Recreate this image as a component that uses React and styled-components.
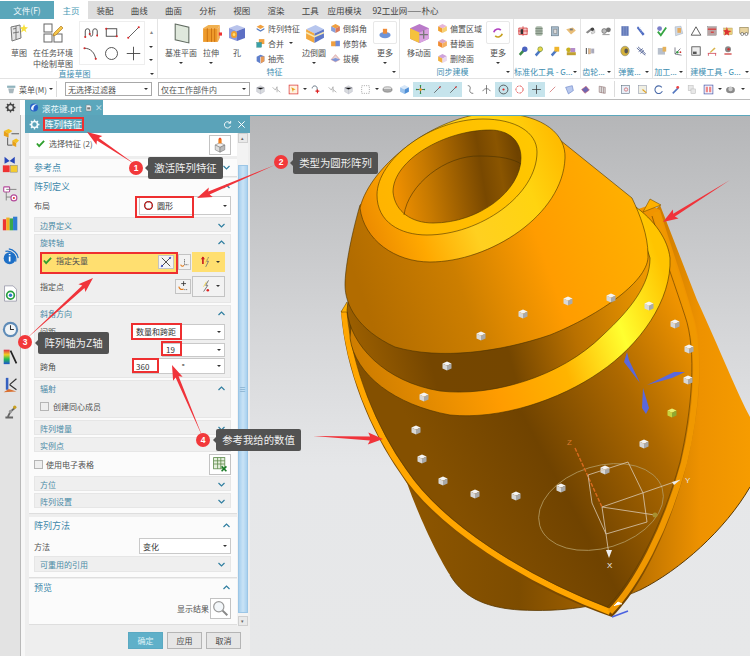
import React from "react";
import styled, { createGlobalStyle } from "styled-components";

const GlobalStyle = createGlobalStyle`
  html, body { margin: 0; padding: 0; background: #fff; }
  body { font-family: "Noto Sans CJK SC", "Noto Sans", sans-serif; font-size: 8px; color: #505050; }
  * { box-sizing: border-box; }
`;

const Page = styled.div`
  position: relative;
  width: 750px;
  height: 656px;
  overflow: hidden;
  display: flex;
  flex-direction: column;
  background: #fff;
`;

/* ---------- title tabs ---------- */
const TabBar = styled.div`
  display: flex;
  height: 18px;
  margin-top: 1px;
  background: #dedede;
  font-size: 8.5px;
`;
const FileTab = styled.div`
  width: 54px;
  background: #5aa6ba;
  color: #eef7fa;
  display: flex;
  align-items: center;
  justify-content: center;
`;
const Tab = styled.div`
  width: ${(p) => p.$w || 34.2}px;
  display: flex;
  align-items: center;
  justify-content: center;
  white-space: nowrap;
  color: ${(p) => (p.$active ? "#4a9ab5" : "#444")};
  background: ${(p) => (p.$active ? "#fff" : "transparent")};
`;

/* ---------- ribbon ---------- */
const Ribbon = styled.div`
  display: flex;
  height: 60px;
  background: #fff;
  border-bottom: 1px solid #e3e3e3;
`;
const Group = styled.div`
  width: ${(p) => p.$w}px;
  flex: none;
  display: flex;
  flex-direction: column;
  border-right: 1px solid #e4e4e4;
  padding-top: 3px;
  overflow: hidden;
`;
const GroupBody = styled.div`
  flex: 1;
  display: flex;
  align-items: flex-start;
  padding-left: ${(p) => p.$pl || 0}px;
`;
const GroupFoot = styled.div`
  position: relative;
  height: 11px;
  line-height: 10px;
  text-align: center;
  color: #3d8db0;
  white-space: nowrap;
  padding-right: 8px;
  &::after {
    content: "";
    position: absolute;
    right: 3px;
    top: 4px;
    border: 2px solid transparent;
    border-top: 2.5px solid #333;
  }
`;
const BigTool = styled.div`
  width: ${(p) => p.$w}px;
  flex: none;
  display: flex;
  flex-direction: column;
  align-items: center;
  text-align: center;
  line-height: 11px;
  white-space: nowrap;
`;
const BigIcon = styled.div`
  height: 22px;
  display: flex;
  align-items: center;
  margin-bottom: 3px;
`;
const Caret = styled.span`
  display: block;
  width: 0;
  height: 0;
  margin: ${(p) => p.$m || "4px auto 0"};
  border: 2px solid transparent;
  border-top: 2.5px solid #333;
  border-bottom: 0;
`;
const Gallery = styled.div`
  width: 66px;
  height: 44px;
  flex: none;
  margin: -1px 0 0 3px;
  border: 1px solid #eee;
  display: grid;
  grid-template-columns: repeat(3, 1fr);
  place-items: center;
`;
const GalleryScroll = styled.div`
  width: 10px;
  height: 44px;
  margin-left: 1px;
  display: flex;
  flex-direction: column;
  align-items: center;
  justify-content: space-around;
  color: #888;
  font-size: 6px;
`;
const ToolList = styled.div`
  width: ${(p) => p.$w}px;
  flex: none;
  display: flex;
  flex-direction: column;
  gap: 3px;
  padding-left: ${(p) => p.$pl || 0}px;
`;
const ListItem = styled.div`
  height: 12px;
  display: flex;
  align-items: center;
  gap: 2px;
  white-space: nowrap;
`;
const MoreButton = styled.div`
  width: 24px;
  height: 23px;
  border: 1px solid #e8e8e8;
  border-radius: 2px;
  display: flex;
  align-items: center;
  justify-content: center;
  margin-bottom: 3px;
  margin-top: -1px;
`;
const MiniGrid = styled.div`
  display: grid;
  grid-template-columns: repeat(${(p) => p.$cols}, 16px);
  grid-auto-rows: 20px;
  place-items: center;
`;

/* ---------- quick toolbar ---------- */
const QuickBar = styled.div`
  display: flex;
  align-items: center;
  height: 21px;
  background: #fff;
  border-bottom: 1px solid #bcbcbc;
  padding-left: 6px;
`;
const MenuButton = styled.div`
  width: 50px;
  flex: none;
  display: flex;
  align-items: center;
  gap: 2px;
  white-space: nowrap;
`;
const BarDivider = styled.div`
  width: 1px;
  height: 16px;
  flex: none;
  background: #dcdcdc;
  margin: ${(p) => p.$m || "0 8px 0 0"};
`;
const BarSelect = styled.div`
  width: ${(p) => p.$w}px;
  height: 14px;
  flex: none;
  margin-right: ${(p) => p.$mr || 0}px;
  border: 1px solid #a8a8a8;
  display: flex;
  align-items: center;
  justify-content: space-between;
  padding: 0 3px 0 2px;
  white-space: nowrap;
`;
const BarIcon = styled.div`
  width: ${(p) => p.$w || 16.5}px;
  height: 15px;
  flex: none;
  display: flex;
  align-items: center;
  justify-content: center;
  background: ${(p) => (p.$on ? "#c6e4ec" : "transparent")};
`;

/* ---------- document tab strip ---------- */
const DocStrip = styled.div`
  display: flex;
  height: 15px;
  background: #fff;
`;
const GearCell = styled.div`
  width: 20px;
  background: #e3e3e3;
  display: flex;
  align-items: center;
  justify-content: center;
  margin-right: 5px;
  color: #444;
`;
const DocTab = styled.div`
  width: 78px;
  background: #5ba7bc;
  color: #eaf6fa;
  display: flex;
  align-items: center;
  gap: 3px;
  padding-left: 4px;
  font-size: 8.5px;
  white-space: nowrap;
`;
const TabClose = styled.span`
  color: #b9dbe5;
  font-size: 9px;
`;

/* ---------- body ---------- */
const Body = styled.div`
  flex: 1;
  display: flex;
  min-height: 0;
`;
const SideBar = styled.div`
  width: 25px;
  flex: none;
  background: #e3e3e3;
  border-right: 4px solid #f7f7f7;
  display: flex;
  flex-direction: column;
  align-items: center;
  box-shadow: inset -1px 0 0 #b9b9b9;
`;
const SideIcon = styled.div`
  height: 17px;
  width: 20px;
  flex: none;
  margin-top: ${(p) => p.$mt}px;
  display: flex;
  align-items: center;
  justify-content: center;
`;

/* ---------- dialog panel ---------- */
const Panel = styled.div`
  width: 225px;
  flex: none;
  display: flex;
  flex-direction: column;
  background: #eeeeee;
`;
const PanelHead = styled.div`
  height: 18px;
  flex: none;
  background: #5ba3b9;
  color: #f2fafc;
  display: flex;
  align-items: center;
  padding: 0 4px;
  gap: 4px;
  font-size: 9.5px;
`;
const HeadActions = styled.div`
  margin-left: auto;
  display: flex;
  gap: 5px;
  align-items: center;
`;
const PanelMid = styled.div`
  display: flex;
  height: 493px;
  padding-left: 4px;
`;
const PanelColumn = styled.div`
  width: 208px;
  display: flex;
  flex-direction: column;
`;
const SelectBlock = styled.div`
  height: 23px;
  background: #fff;
  display: flex;
  align-items: center;
  justify-content: space-between;
  padding: 0 6px 0 7px;
  margin-bottom: 3px;
`;
const CheckedLabel = styled.div`
  display: flex;
  align-items: center;
  gap: 4px;
  padding-bottom: 3px;
`;
const Section = styled.div`
  background: #fbfbfb;
  height: ${(p) => p.$h}px;
  margin-bottom: ${(p) => p.$mb || 0}px;
  border-bottom: 1px solid #dedede;
  padding: 0 6px 0 5px;
  display: flex;
  flex-direction: column;
`;
const SectionTitle = styled.div`
  height: 17px;
  flex: none;
  display: flex;
  align-items: center;
  justify-content: space-between;
  color: #3f88aa;
  font-size: 9px;
  padding-right: 1px;
`;
const Sub = styled.div`
  background: #efefef;
  border: 1px solid #e6e6e6;
  height: ${(p) => p.$h}px;
  flex: none;
  margin: 1px 0;
  padding: 0 5px;
  display: flex;
  flex-direction: column;
`;
const SubTitle = styled.div`
  height: 14px;
  flex: none;
  display: flex;
  align-items: center;
  justify-content: space-between;
  color: #4b8aa6;
  font-size: 8px;
`;
const FieldRow = styled.div`
  height: ${(p) => p.$h || 16}px;
  flex: none;
  display: flex;
  align-items: center;
  justify-content: space-between;
  margin-top: ${(p) => p.$mt || 0}px;
`;
const Drop = styled.div`
  width: ${(p) => p.$w}px;
  height: ${(p) => p.$h || 16}px;
  flex: none;
  background: #fff;
  border: 1px solid #c9c9c9;
  display: flex;
  align-items: center;
  justify-content: space-between;
  padding: 0 3px;
  gap: 3px;
  color: #333;
`;
const DropValue = styled.span`
  display: flex;
  align-items: center;
  gap: 3px;
  white-space: nowrap;
`;
const VectorBar = styled.div`
  width: 137px;
  height: 20px;
  background: #ffdf70;
  display: flex;
  align-items: center;
  justify-content: space-between;
  padding: 0 3px 0 3px;
`;
const SmallBtn = styled.div`
  width: ${(p) => p.$w || 16}px;
  height: ${(p) => p.$h || 16}px;
  flex: none;
  background: ${(p) => p.$bg || "#f2f2f2"};
  border: 1px solid ${(p) => p.$line || "#c3c3c3"};
  display: flex;
  align-items: center;
  justify-content: center;
`;
const BtnGroup = styled.div`
  display: flex;
  align-items: center;
  gap: 1px;
`;
const CheckBox = styled.span`
  width: 9px;
  height: 9px;
  flex: none;
  background: #eee;
  border: 1px solid #b5b5b5;
  display: inline-block;
`;
const CheckRow = styled.div`
  display: flex;
  align-items: center;
  gap: 4px;
  height: ${(p) => p.$h || 20}px;
  justify-content: ${(p) => (p.$between ? "space-between" : "flex-start")};
  flex: none;
`;
const RightRow = styled.div`
  display: flex;
  align-items: center;
  justify-content: flex-end;
  gap: 1px;
  height: 24px;
`;
const ScrollTrack = styled.div`
  width: 11px;
  background: #f3f3f3;
  display: flex;
  flex-direction: column;
  align-items: center;
  height: 493px;
`;
const ScrollArrow = styled.div`
  width: 10px;
  height: 10px;
  flex: none;
  background: #e9e9e9;
  border: 1px solid #cfcfcf;
  margin-top: ${(p) => p.$mt || 0}px;
  color: #666;
  font-size: 5px;
  line-height: 8px;
  text-align: center;
`;
const ScrollThumb = styled.div`
  width: 10px;
  height: 448px;
  margin-top: 22px;
  background: linear-gradient(90deg, #a8d0ee, #c9e3f6 50%, #a9d1ef);
  border: 1px solid #9cc6e6;
  display: flex;
  align-items: center;
  justify-content: center;
  color: #6e9cc0;
  font-size: 7px;
`;
const PanelFoot = styled.div`
  flex: 1;
  display: flex;
  align-items: flex-start;
  justify-content: flex-end;
  gap: 4px;
  padding: 6px 9px 0 0;
`;
const ActionBtn = styled.div`
  width: 35px;
  height: 17px;
  display: flex;
  align-items: center;
  justify-content: center;
  background: ${(p) => (p.$primary ? "#5fb0c9" : "#e6e6e6")};
  border: 1px solid ${(p) => (p.$primary ? "#5aa9c2" : "#b5b5b5")};
  color: ${(p) => (p.$primary ? "#dff2f7" : "#444")};
`;

/* ---------- viewport ---------- */
const Viewport = styled.div`
  flex: 1;
  min-width: 0;
  background: linear-gradient(180deg, #b5b6b8 0%, #d5d6d8 40%, #e6e7e9 65%, #e7e8e9 100%);
  border-top: 1px solid #5ba7bc;
  overflow: hidden;
`;
const ModelSvg = styled.svg`
  display: block;
  width: 500px;
  height: 540px;
`;

/* ---------- callouts over the page ---------- */
const ArrowLayer = styled.svg`
  position: absolute;
  left: 0;
  top: 0;
  width: 750px;
  height: 656px;
  pointer-events: none;
`;
const Mark = styled.div`
  position: absolute;
  left: ${(p) => p.$x}px;
  top: ${(p) => p.$y}px;
  width: ${(p) => p.$w}px;
  height: ${(p) => p.$h}px;
  border: 2px solid #ee2f30;
`;
const Badge = styled.div`
  position: absolute;
  left: ${(p) => p.$x - 7}px;
  top: ${(p) => p.$y - 7}px;
  width: 14px;
  height: 14px;
  border-radius: 50%;
  background: #f2383a;
  color: #fff;
  font: bold 8.5px/14px "Liberation Sans", sans-serif;
  text-align: center;
`;
const Tip = styled.div`
  position: absolute;
  left: ${(p) => p.$x}px;
  top: ${(p) => p.$y}px;
  width: ${(p) => p.$w}px;
  height: 22px;
  border-radius: 2px;
  background: #525252;
  color: #f0f0f0;
  font-size: 10.4px;
  line-height: 21px;
  text-align: center;
  white-space: nowrap;
  &::before {
    content: "";
    position: absolute;
    left: -3px;
    top: 8px;
    border: 3px solid transparent;
    border-left: 0;
    border-right-color: #525252;
  }
`;

/* ---------- drawings ---------- */
const cube = (top, left, right) => (
  <>
    <polygon points="10,2 18,6 10,10 2,6" fill={top} />
    <polygon points="2,6 10,10 10,18 2,14" fill={left} />
    <polygon points="18,6 10,10 10,18 18,14" fill={right} />
  </>
);
const dots = (list, c = "#d8282a") =>
  list.map(([x, y], i) => <circle key={i} cx={x} cy={y} r="1.4" fill={c} />);

const GLYPHS = {
  sketch: (
    <>
      <path d="M2 4l9-2 1 13-9 3z" fill="#e4e4e4" stroke="#777" />
      <path d="M4 6l3-.6M4 10l6-1M7 3v13" stroke="#777" fill="none" />
      <path d="M15 1l1 3 3 .5-2.5 2 1 3-2.5-2-3 2 1-3-2-2 3-.5z" fill="#f7e03c" />
    </>
  ),
  task: (
    <>
      <rect x="1" y="1" width="8" height="8" fill="#fff" stroke="#666" />
      <rect x="1" y="11" width="8" height="8" fill="#fff" stroke="#666" />
      <rect x="11" y="11" width="8" height="8" fill="#fff" stroke="#666" />
      <path d="M11 10l7-7 2 2-7 7-3 1z" fill="#f5c64a" stroke="#a36b12" strokeWidth=".6" />
    </>
  ),
  curve: (
    <>
      <path d="M3 16V8a3 3 0 016 0v4c0 2 1 3 2 3s2-1 2-4V8a3 3 0 016 0v6" fill="none" stroke="#444" strokeWidth="1.2" />
      {dots([[3, 16], [9, 12], [19, 14]])}
    </>
  ),
  rect: (
    <>
      <rect x="3" y="5" width="14" height="10" fill="none" stroke="#444" strokeWidth="1.2" />
      {dots([[3, 5], [17, 15]])}
    </>
  ),
  line: (
    <>
      <path d="M3 17L17 3" stroke="#444" strokeWidth="1.1" />
      {dots([[3, 17], [17, 3]])}
    </>
  ),
  arc: (
    <>
      <path d="M2 3c8 0 14 6 15 15" fill="none" stroke="#444" strokeWidth="1.2" />
      {dots([[2, 3], [17, 17]])}
    </>
  ),
  circle: <circle cx="10" cy="10" r="8" fill="none" stroke="#444" strokeWidth="1.2" />,
  plus: <path d="M10 1v18M1 10h18" stroke="#444" strokeWidth="1.2" />,
  plane: <path d="M4 1l13 3v15L4 16z" fill="#dfe8dc" stroke="#606a60" />,
  extrude: (
    <>
      <path d="M2 5l5-3h11l-2 3z" fill="#f0b050" />
      <path d="M2 5h14v13H2z" fill="#ee9a2a" />
      <path d="M16 5l2-3v12l-2 4z" fill="#f3b05c" />
      <path d="M6 5v13M10 5v13M13 5v13" stroke="#c66b10" strokeWidth=".8" />
      <rect x="17" y="9" width="3" height="3" fill="#e33" />
    </>
  ),
  hole: (
    <>
      <polygon points="2,5 10,2 18,5 10,8" fill="#b9c4ec" />
      <polygon points="2,5 10,8 10,18 2,15" fill="#8c9bdc" />
      <polygon points="18,5 10,8 10,18 18,15" fill="#5d6fc4" />
      <ellipse cx="7" cy="11.500" rx="3" ry="3.500" fill="#f0a030" />
      <ellipse cx="7" cy="11.500" rx="1.300" ry="1.600" fill="#ffe070" />
    </>
  ),
  pattern: (
    <>
      <polygon points="10,3 17,7 10,11 3,7" fill="#f0a040" />
      <polygon points="3,9 10,13 17,9 17,12 10,16 3,12" fill="#5b7fc2" />
    </>
  ),
  unite: (
    <>
      <rect x="7" y="2" width="10" height="9" fill="#f0a040" />
      <rect x="3" y="8" width="9" height="9" fill="#39a0a8" stroke="#276" strokeWidth=".5" />
    </>
  ),
  shell: (
    <>
      <polygon points="3,7 10,3 17,6 17,15 10,19 3,15" fill="#5f7fcb" />
      <polygon points="10,7 17,6 17,15 10,19" fill="#e99a55" />
      <path d="M10 7v12" stroke="#fff" />
    </>
  ),
  blend: (
    <>
      <polygon points="2,6 11,2 19,6 10,10" fill="#b7c6ee" />
      <polygon points="2,6 10,10 10,19 2,15" fill="#f3a83c" />
      <polygon points="19,6 10,10 10,19 19,14" fill="#5f78c8" />
      <path d="M2 9l8 4 9-4" stroke="#f5e6b0" strokeWidth="1.5" fill="none" />
    </>
  ),
  chamfer: cube("#f0a040", "#8aa0da", "#d9785a"),
  trim: (
    <>
      <rect x="2" y="6" width="9" height="9" fill="#f0a040" />
      <rect x="10" y="5" width="8" height="10" fill="#6f8ad6" />
    </>
  ),
  draft: (
    <>
      <polygon points="10,3 18,12 10,16 2,12" fill="#e8d7d7" stroke="#b33" strokeWidth=".6" />
      <polygon points="2,12 10,16 18,12 10,9" fill="#7f95d8" />
    </>
  ),
  sync: (
    <>
      <path d="M4 9a6 6 0 0110-3" fill="none" stroke="#b040c0" strokeWidth="2.4" />
      <path d="M16 11a6 6 0 01-10 3" fill="none" stroke="#c6a020" strokeWidth="2.4" />
    </>
  ),
  push: (
    <>
      <ellipse cx="10" cy="13" rx="8" ry="4.500" fill="#6f94d8" />
      <rect x="7" y="4" width="6" height="7" fill="#ef8c38" />
    </>
  ),
  move: (
    <>
      <polygon points="10,1 19,5 19,15 10,19 1,15 1,5" fill="#b97ac9" />
      <polygon points="1,5 10,9 10,19 1,15" fill="#f5c23d" />
      <polygon points="19,5 10,9 10,19 19,15" fill="#d9a2e0" />
      <path d="M14 7v8M10 11h8" stroke="#777" strokeWidth="1.2" />
    </>
  ),
  offset: cube("#e6b5d8", "#f0a030", "#f7cf6e"),
  replace: cube("#dba6c9", "#f08a30", "#f5b060"),
  remove: cube("#cfa3db", "#f0b040", "#e9d8ee"),
  redGrid: (
    <>
      <rect x="3" y="5" width="14" height="11" fill="#e88" opacity=".5" />
      <path d="M3 5h14v11H3zM10 2v16M2 10h16" fill="none" stroke="#c22" strokeWidth="1.1" />
      <rect x="6" y="7" width="4" height="8" fill="#333" />
    </>
  ),
  stack: (
    <>
      <rect x="4" y="2" width="12" height="16" rx="3" fill="#a8b7a8" />
      <path d="M4 6h12M4 10h12M4 14h12" stroke="#5a6a5a" />
    </>
  ),
  stack2: (
    <>
      <rect x="4" y="3" width="12" height="15" fill="#a9bccb" stroke="#5d7282" />
      <rect x="8" y="7" width="5" height="7" fill="#dcdcdc" stroke="#888" />
    </>
  ),
  tag: (
    <>
      <path d="M2 7l11-3 5 5-8 7z" fill="#e9be78" />
      <rect x="8" y="6" width="5" height="3" fill="#777" />
    </>
  ),
  clamp: (
    <>
      <path d="M3 12l9-7 2 3-8 6z" fill="#8a8a8a" />
      <circle cx="14" cy="7" r="3" fill="#444" />
      <path d="M12 12l6-3v4l-5 2z" fill="#ddd" stroke="#666" strokeWidth=".5" />
    </>
  ),
  clamp2: (
    <>
      <circle cx="7" cy="10" r="4" fill="#bbb" stroke="#555" />
      <circle cx="14" cy="8" r="4" fill="#777" />
      <path d="M4 16h12" stroke="#555" />
    </>
  ),
  wrenchBlue: (
    <>
      <path d="M3 15l8-9 3 3-8 9z" fill="#3f8a4a" />
      <circle cx="13" cy="7" r="4.500" fill="#4b62c0" />
    </>
  ),
  wrenchMix: (
    <>
      <path d="M3 16l8-9 3 3-8 9z" fill="#4d78c4" />
      <circle cx="12" cy="7" r="4" fill="#e8d84a" stroke="#6a8a30" />
    </>
  ),
  wrenchGold: (
    <>
      <path d="M3 16l8-9 3 3-8 9z" fill="#4d78c4" />
      <rect x="9" y="3" width="8" height="8" fill="#efb52c" />
    </>
  ),
  goldGear: (
    <>
      <circle cx="6" cy="8" r="4" fill="#c8b020" />
      <rect x="9" y="5" width="8" height="7" fill="#b58cc9" />
      <rect x="3" y="12" width="15" height="5" fill="#c0a030" />
    </>
  ),
  pin: (
    <>
      <rect x="3" y="5" width="2" height="10" fill="#666" />
      <rect x="7" y="6" width="4" height="9" fill="#e5b98b" stroke="#888" strokeWidth=".5" />
      <rect x="12" y="6" width="5" height="8" fill="#aab" />
    </>
  ),
  spring: (
    <>
      <rect x="4" y="2" width="12" height="16" fill="#6078b8" />
      <path d="M8 2v16M12 2v16" stroke="#9fb0dc" />
    </>
  ),
  screw: (
    <>
      <path d="M5 2l11 13-3 3L3 5z" fill="#4f6cc2" />
      <path d="M7 6l3-2M9 9l3-2M11 12l3-2" stroke="#d4e0f7" />
    </>
  ),
  drum: (
    <>
      <ellipse cx="10" cy="10" rx="7" ry="8" fill="#d4b13a" stroke="#887" />
      <ellipse cx="12" cy="10" rx="3" ry="4" fill="#555" />
    </>
  ),
  coil: <path d="M3 5l14 12M5 3l13 12M6 11l7-5M9 14l6-5" stroke="#5c6c9c" strokeWidth="1.6" fill="none" />,
  checkTool: (
    <>
      <circle cx="6" cy="6" r="4" fill="#7b7fc8" />
      <path d="M3 11l5 6 9-13" fill="none" stroke="#35a542" strokeWidth="3" />
    </>
  ),
  sheet: (
    <>
      <path d="M5 3l10-1 3 12-12 4z" fill="#cfd8e4" stroke="#8a98a8" strokeWidth=".6" />
      <rect x="9" y="5" width="6" height="8" fill="#e8a040" opacity=".8" />
    </>
  ),
  sheet2: (
    <>
      <rect x="3" y="5" width="12" height="11" fill="#b8c0cc" />
      <rect x="11" y="3" width="6" height="8" fill="#e4b15a" />
    </>
  ),
  axis: (
    <>
      <path d="M5 4v11l11 2M5 15l9-9" fill="none" stroke="#556" strokeWidth="1.2" />
      <circle cx="9" cy="12" r="2" fill="#3a9a4a" />
      <circle cx="14" cy="12" r="1.500" fill="#c33" />
    </>
  ),
  triangle: <path d="M10 3l8 14H2z" fill="none" stroke="#444" strokeWidth="1.4" />,
  tableRed: (
    <>
      <rect x="3" y="3" width="14" height="14" fill="#b9a3a3" stroke="#666" strokeWidth=".6" />
      <path d="M3 7h14" stroke="#d33" strokeWidth="2" />
      <path d="M8 12h5" stroke="#d33" strokeWidth="2" />
    </>
  ),
  starBox: (
    <>
      <rect x="3" y="5" width="14" height="11" fill="#e8cf7a" stroke="#a08a4a" strokeWidth=".6" />
      <path d="M8 3l2 6 6 1-5 3 1 5-4-3-4 3 1-6-3-3 5-1z" fill="#d33" />
    </>
  ),
  clips: (
    <>
      <rect x="3" y="4" width="14" height="10" fill="#e8d4a0" stroke="#8a7a4a" />
      <circle cx="7" cy="15" r="2.500" fill="#fff" stroke="#444" />
      <circle cx="14" cy="15" r="2.500" fill="#fff" stroke="#444" />
    </>
  ),
  frame: (
    <>
      <rect x="3" y="3" width="14" height="14" fill="#eee" stroke="#444" strokeWidth="1.3" />
      <rect x="5" y="11" width="6" height="4" fill="#555" />
    </>
  ),
  bench: (
    <>
      <path d="M3 14h14M4 14v4M16 14v4" stroke="#c34" strokeWidth="1.2" />
      <path d="M6 12l8-8 2 2-8 7z" fill="#d8b44a" />
    </>
  ),
  badgeTool: (
    <>
      <circle cx="10" cy="7" r="5" fill="#888" />
      <circle cx="11" cy="7" r="2" fill="#c33" />
      <path d="M4 15h12" stroke="#c33" strokeWidth="2" />
    </>
  ),
  gear: (
    <>
      <circle cx="10" cy="10" r="5.500" fill="none" stroke="currentColor" strokeWidth="3" />
      <path d="M10 1v3M10 16v3M1 10h3M16 10h3M3.600 3.600l2.100 2.100M14.300 14.300l2.100 2.100M3.600 16.400l2.100-2.100M14.300 5.700l2.100-2.100" stroke="currentColor" strokeWidth="2.400" />
    </>
  ),
  nxLogo: (
    <>
      <circle cx="10" cy="10" r="8" fill="#2660c8" />
      <path d="M4 11c2-6 8-8 12-7-5 1-8 6-7 12-3 0-5-2-5-5z" fill="#e9f1fb" />
    </>
  ),
  doc: (
    <>
      <path d="M3 2h10l4 4v12H3z" fill="#eef2f5" stroke="#777" strokeWidth="1.4" />
      <rect x="6" y="8" width="8" height="6" fill="#777" />
    </>
  ),
  refresh: <path d="M16 7a7 7 0 10.8 6M17 2v5h-5" fill="none" stroke="#fff" strokeWidth="2" />,
  close: <path d="M3 3l14 14M17 3L3 17" stroke="#fff" strokeWidth="2.200" />,
  check: <path d="M2 10l5 6L18 4" fill="none" stroke="#2f9f2d" strokeWidth="4" />,
  ring: (
    <>
      <circle cx="10" cy="10" r="7" fill="none" stroke="#7a1a1a" strokeWidth="2.400" />
      {dots([[10, 3], [17, 10], [10, 17], [3, 10], [15, 5], [5, 15], [5, 5], [15, 15]], "#e02020")}
    </>
  ),
  box3d: (
    <>
      <polygon points="4,10 10,7 16,10 10,13" fill="#eee" stroke="#666" strokeWidth=".6" />
      <polygon points="4,10 10,13 10,19 4,16" fill="#ddd" stroke="#666" strokeWidth=".6" />
      <polygon points="16,10 10,13 10,19 16,16" fill="#bbb" stroke="#666" strokeWidth=".6" />
      <rect x="8" y="2" width="4" height="6" fill="#f08020" />
      <rect x="9" y="1" width="2" height="2" fill="#e22" />
    </>
  ),
  vectorX: (
    <>
      <path d="M3 3l14 14M17 3L3 17" stroke="#222" strokeWidth="1.300" />
      <path d="M15 3l3-1-1 3zM5 17l-3 1 1-3z" fill="#2a3cc0" stroke="#2a3cc0" />
    </>
  ),
  vecAxes: (
    <>
      <path d="M10 4v10M10 14h7" stroke="#333" strokeWidth="1.200" strokeDasharray="2 1" fill="none" />
      <path d="M3 14c1 3 4 4 6 1" stroke="#e27a1a" strokeWidth="2" fill="none" />
    </>
  ),
  vecPlus: (
    <>
      <path d="M11 2v8M7 6h8" stroke="#333" strokeWidth="1.400" />
      <path d="M3 11c1 4 4 6 8 4" stroke="#e27a1a" strokeWidth="2" fill="none" />
      <path d="M12 16h6" stroke="#333" strokeDasharray="2 1" />
    </>
  ),
  inferred: (
    <>
      <path d="M7 3v10" stroke="#c92020" strokeWidth="2.400" />
      <path d="M4 6l3-4 3 4z" fill="#c92020" />
      <path d="M15 3l-3 6h3l-4 8" fill="none" stroke="#777" strokeWidth="1.300" />
      <path d="M14 4l-4 8" stroke="#f0d040" strokeWidth="1" />
    </>
  ),
  wand: (
    <>
      <path d="M15 2l-4 7h3l-6 9" fill="none" stroke="#777" strokeWidth="1.400" />
      <path d="M12 4l-4 7" stroke="#f0d040" strokeWidth="1.200" />
      <circle cx="14" cy="16" r="1.800" fill="#d22" />
    </>
  ),
  table: (
    <>
      <rect x="2" y="2" width="14" height="14" fill="#e4efdc" stroke="#5d8a4a" />
      <path d="M2 6h14M2 10h14M7 2v14M11 2v14" stroke="#5d8a4a" />
      <path d="M12 13l6 6M18 13l-6 6" stroke="#1b7c28" strokeWidth="2" />
    </>
  ),
  lens: (
    <>
      <circle cx="8" cy="8" r="6" fill="#f3f7fa" stroke="#9a9a9a" strokeWidth="1.400" />
      <path d="M12.500 12.500L18 18" stroke="#888" strokeWidth="2.400" />
    </>
  ),
  filterMenu: (
    <>
      <rect x="2" y="3" width="15" height="4" fill="#8fb3bd" />
      <path d="M4 8h11l-2 9H6z" fill="#a8b7bd" />
    </>
  ),
  faded: (
    <>
      <polygon points="10,3 17,7 17,14 10,18 3,14 3,7" fill="#d8dbde" stroke="#aab" strokeWidth=".6" />
      <path d="M10 10v8M3 7l7 3 7-3" stroke="#aab" strokeWidth=".6" />
    </>
  ),
  faded2: <path d="M3 6l5 5M8 11l3-6M11 5v10M11 10l6 5" stroke="#aaa" strokeWidth="1.500" fill="none" />,
  snapBox: (
    <>
      <rect x="2" y="2" width="16" height="16" fill="#fff3e0" stroke="#d33" strokeWidth="1.300" />
      <path d="M6 6l8 4-4 1-1 4z" fill="#e8a020" />
    </>
  ),
  hook: (
    <>
      <path d="M4 8c0-6 9-6 9 0v6" fill="none" stroke="#567" strokeWidth="1.600" />
      <path d="M10 13h7M13.500 10v7" stroke="#e02020" strokeWidth="2" />
    </>
  ),
  ghostBox: <rect x="3" y="3" width="14" height="14" fill="none" stroke="#999" strokeDasharray="2 2" strokeWidth="1.400" />,
  cyl: (
    <>
      <ellipse cx="10" cy="9" rx="8" ry="4" fill="#ddd" stroke="#555" strokeWidth=".8" />
      <path d="M2 9v3c1 4 15 4 16 0V9" fill="#aaa" stroke="#555" strokeWidth=".8" />
    </>
  ),
  blueCube: cube("#d7e7f8", "#9cc4ee", "#4f8fd6"),
  dotsCross: (
    <>
      <path d="M10 3v14M3 10h14" stroke="#333" strokeWidth="1.300" />
      {dots([[10, 3], [10, 17], [3, 10], [17, 10]], "#1a9a3a")}
      <circle cx="10" cy="10" r="2.500" fill="#f0a020" />
    </>
  ),
  slash: (
    <>
      <path d="M4 16L16 4" stroke="#444" strokeWidth="1.300" />
      <circle cx="14" cy="6" r="1.600" fill="#d33" />
    </>
  ),
  curl: <path d="M5 3c5 0 5 4 4 7s0 7 6 7" fill="none" stroke="#555" strokeWidth="1.400" />,
  tri: <path d="M10 2v16M3 13c3-6 11-6 14 0" fill="none" stroke="#555" strokeWidth="1.300" />,
  target: (
    <>
      <circle cx="10" cy="10" r="8" fill="none" stroke="#333" strokeWidth="1.300" />
      <circle cx="10" cy="10" r="2" fill="#d22" />
    </>
  ),
  redRing: <circle cx="10" cy="10" r="6.500" fill="none" stroke="#d33" strokeWidth="1.600" strokeDasharray="4 2" />,
  redCross: <path d="M10 2v16M2 10h16" stroke="#333" strokeWidth="1.300" />,
  dash: <path d="M5 15L15 5" stroke="#c66" strokeWidth="1.300" />,
  face: <path d="M3 6l12-3 2 9-9 6z" fill="#b8c8ee" stroke="#5978c0" />,
  faceDark: <path d="M3 10l8-6 6 7-8 6z" fill="#6f66b0" stroke="#c56" />,
  plates: <path d="M4 4l11 2v11L4 15zM8 5v11M12 6v11" fill="#ddd" stroke="#866" />,
  zoomBox: (
    <>
      <rect x="3" y="3" width="14" height="14" fill="#e8eef7" stroke="#567" />
      <circle cx="11" cy="10" r="3" fill="none" stroke="#c33" />
    </>
  ),
  zoomBox2: (
    <>
      <rect x="3" y="3" width="14" height="14" fill="#f0efe3" stroke="#8a94a4" />
      <path d="M10 10l7 6" stroke="#e0a020" strokeWidth="2" />
    </>
  ),
  rotate: <path d="M16 6a7 7 0 10 1 7" fill="none" stroke="#4a6aa8" strokeWidth="2" />,
  paint: (
    <>
      <path d="M4 16l10-10 2 2-10 10z" fill="#5578c0" />
      <circle cx="14" cy="6" r="2.500" fill="#e44" />
    </>
  ),
  ghostDocs: (
    <>
      <rect x="4" y="3" width="9" height="9" fill="#e8e8e8" stroke="#bbb" />
      <rect x="9" y="9" width="8" height="8" fill="#e8e8e8" stroke="#bbb" />
    </>
  ),
  panel: (
    <>
      <rect x="2" y="2" width="16" height="16" fill="#f5f5ff" stroke="#4a5aa8" strokeWidth="1.300" />
      <rect x="5" y="5" width="4" height="10" fill="#e88" />
      <rect x="11" y="5" width="4" height="10" fill="#e88" />
    </>
  ),
  globe: (
    <>
      <ellipse cx="10" cy="11" rx="8" ry="6" fill="#8a8a8a" />
      <circle cx="10" cy="9" r="4" fill="#ccc" />
    </>
  ),
  sideTree: (
    <>
      <polygon points="3,2 8,0 12,2 8,5" fill="#f4c020" />
      <polygon points="3,2 8,5 8,9 3,7" fill="#e8a018" />
      <polygon points="12,12 16,10 19,12 16,15" fill="#f4c020" />
      <polygon points="12,12 16,15 16,19 12,17" fill="#e8a018" />
      <path d="M7 9v8h5M11 5h8" stroke="#555" fill="none" />
    </>
  ),
  sideAsm: (
    <>
      <rect x="1" y="11" width="8" height="8" fill="#e33" />
      <rect x="10" y="11" width="8" height="8" fill="#f5cc30" stroke="#777" strokeWidth=".5" />
      <path d="M3 1l6 5 6-5v8l-6-3-6 3z" fill="#2646b8" />
    </>
  ),
  sideLink: (
    <>
      <rect x="2" y="1" width="7" height="6" rx="1" fill="#fff" stroke="#b34a9a" strokeWidth="1.300" />
      <path d="M5 7v10M5 13h6M5 4h12" stroke="#777" fill="none" />
      <circle cx="14" cy="14" r="3.500" fill="#fff" stroke="#b34a9a" strokeWidth="1.300" />
      <circle cx="14" cy="14" r="1.200" fill="#d33" />
    </>
  ),
  sideBooks: (
    <>
      <rect x="1" y="5" width="4" height="13" fill="#e33" />
      <rect x="5" y="3" width="4" height="15" fill="#f3b020" />
      <rect x="9" y="4" width="4" height="14" fill="#3aa84a" />
      <rect x="13" y="2" width="5" height="16" fill="#2f7bd0" />
    </>
  ),
  sideInfo: (
    <>
      <circle cx="9" cy="12" r="7" fill="#1d6fc6" />
      <path d="M9 10v6M9 7v1.600" stroke="#fff" strokeWidth="2" />
      <path d="M4 4a10 10 0 0112 12M8 1a13 13 0 0111 11" fill="none" stroke="#1d6fc6" strokeWidth="1.400" />
    </>
  ),
  sideDoc: (
    <>
      <path d="M3 1h10l4 4v14H3z" fill="#fff" stroke="#99a" />
      <circle cx="10" cy="12" r="4.500" fill="none" stroke="#29a040" strokeWidth="2" />
      <circle cx="10" cy="12" r="2" fill="#2f74c8" />
    </>
  ),
  sideClock: (
    <>
      <circle cx="10" cy="10" r="9" fill="#5f8cb8" />
      <circle cx="10" cy="10" r="6.500" fill="#f1f4f6" />
      <path d="M10 5v5h4" stroke="#333" strokeWidth="1.200" fill="none" />
    </>
  ),
  sideColor: (
    <>
      <defs>
        <linearGradient id="rainbow" x1="0" y1="0" x2="0" y2="1">
          <stop offset="0" stopColor="#e0304a" />
          <stop offset=".35" stopColor="#f0d020" />
          <stop offset=".65" stopColor="#20c050" />
          <stop offset="1" stopColor="#2050d0" />
        </linearGradient>
      </defs>
      <rect x="2" y="2" width="7" height="17" fill="url(#rainbow)" />
      <path d="M10 3l7 15" stroke="#222" strokeWidth="2" />
    </>
  ),
  sideRuler: (
    <>
      <path d="M6 1v14" stroke="#3560c0" strokeWidth="3" />
      <path d="M2 18l6-4 9 3z" fill="#d97030" />
      <path d="M9 9l8-7M9 9l8 6" stroke="#333" strokeWidth="1.400" />
    </>
  ),
  sideRobot: (
    <>
      <path d="M4 17h9M7 16l3-6 5-4" stroke="#666" strokeWidth="2.200" fill="none" />
      <circle cx="10" cy="10" r="2" fill="#999" />
      <circle cx="15" cy="5" r="2" fill="#c9a020" />
    </>
  ),
};

const Icon = ({ k, s = 12 }) => (
  <svg width={s} height={s} viewBox="0 0 20 20">
    {GLYPHS[k]}
  </svg>
);

const Chevron = ({ up }) => (
  <svg width="7" height="5" viewBox="0 0 7 5">
    <path d={up ? "M.5 4L3.500 1 6.500 4" : "M.5 1L3.500 4 6.500 1"} fill="none" stroke="#2f7ea0" strokeWidth="1.200" />
  </svg>
);

const arrow = ([x1, y1], [x2, y2], w = 3.2) => {
  const len = Math.hypot(x2 - x1, y2 - y1);
  const ux = (x2 - x1) / len;
  const uy = (y2 - y1) / len;
  const at = (d, o) => `${(x1 + ux * d - uy * o).toFixed(1)},${(y1 + uy * d + ux * o).toFixed(1)}`;
  const neck = len - 13;
  return [at(0, 0), at(neck, -w / 2), at(neck - 2, -w - 2), at(len, 0), at(neck - 2, w + 2), at(neck, w / 2)].join(" ");
};

const ARROWS = [
  [[136, 165], [87, 132]],
  [[275, 165], [197, 198]],
  [[25, 340], [93, 278]],
  [[203, 438], [172, 365]],
  [[730, 180], [663, 222]],
  [[313, 436], [383, 439], 4],
];

const CUBES = [
  [447, 366], [481, 336], [523, 314], [568, 301], [611, 298], [649, 306], [675, 324], [689, 349], [688, 380],
  [424, 397], [416, 430], [422, 459], [443, 481], [475, 494], [516, 496], [561, 488], [605, 470], [644, 444],
];

const MiniCube = ({ x, y, top = "#f4f4f4", left = "#d8d8d8", right = "#a9a9a9" }) => (
  <g transform={`translate(${x - 4.500} ${y - 4.500})`}>
    <polygon points="4.500,0 9,2 4.500,4.200 0,2" fill={top} />
    <polygon points="0,2 4.500,4.200 4.500,9 0,7" fill={left} />
    <polygon points="9,2 4.500,4.200 4.500,9 9,7" fill={right} />
  </g>
);

const Stops = ({ list }) => list.map(([o, c]) => <stop key={o} offset={o} stopColor={c} />);

const Model = () => (
  <ModelSvg viewBox="250 116 500 540">
    <defs>
      <linearGradient id="gBody" gradientUnits="userSpaceOnUse" x1="420" y1="0" x2="750" y2="0">
        <Stops list={[[0, "#8c5500"], [0.3, "#7d4c00"], [0.62, "#b06a00"], [0.85, "#ee9200"], [1, "#f69c00"]]} />
      </linearGradient>
      <linearGradient id="gShell" gradientUnits="userSpaceOnUse" x1="440" y1="480" x2="700" y2="340">
        <Stops list={[[0, "#845000"], [0.35, "#704300"], [0.7, "#ac6800"], [1, "#f09400"]]} />
      </linearGradient>
      <linearGradient id="gRing" gradientUnits="userSpaceOnUse" x1="360" y1="400" x2="670" y2="290">
        <Stops list={[[0, "#c97a00"], [0.4, "#ff9c00"], [0.62, "#ffb400"], [0.82, "#ffff30"], [1, "#ffc400"]]} />
      </linearGradient>
      <linearGradient id="gBand" gradientUnits="userSpaceOnUse" x1="350" y1="360" x2="650" y2="280">
        <Stops list={[[0, "#a06200"], [0.25, "#754600"], [0.5, "#744600"], [0.72, "#b87000"], [1, "#f09a00"]]} />
      </linearGradient>
      <linearGradient id="gCone" gradientUnits="userSpaceOnUse" x1="360" y1="290" x2="640" y2="190">
        <Stops list={[[0, "#b26c00"], [0.32, "#cc7e00"], [0.62, "#ff9c00"], [1, "#ffb200"]]} />
      </linearGradient>
      <linearGradient id="gTopBand" gradientUnits="userSpaceOnUse" x1="362" y1="240" x2="565" y2="160">
        <Stops list={[[0, "#e98600"], [0.25, "#ffa800"], [0.5, "#ffd020"], [0.8, "#ffd410"], [1, "#ffbc00"]]} />
      </linearGradient>
      <linearGradient id="gFace" gradientUnits="userSpaceOnUse" x1="380" y1="210" x2="535" y2="140">
        <Stops list={[[0, "#ffb400"], [1, "#ffc800"]]} />
      </linearGradient>
      <linearGradient id="gHole" gradientUnits="userSpaceOnUse" x1="395" y1="190" x2="520" y2="170">
        <Stops list={[[0, "#f09000"], [0.25, "#c87a00"], [0.7, "#784800"], [0.85, "#8a5500"], [1, "#6f4300"]]} />
      </linearGradient>
    </defs>

    {/* lower cylinder */}
    <path
      d="M660 205 L697 300 C720 350 738 395 750 417 L750 487 C725 530 680 570 640 590 C600 608 560 612 520 610 C490 608 465 600 450 575 C440 560 420 520 407 483 L400 470 Z"
      fill="url(#gBody)"
    />
    <path d="M750 487 C725 530 680 570 640 590" fill="none" stroke="#5a3800" strokeWidth="1" />
    <path d="M640 590 C600 608 560 612 520 610 C490 608 465 600 450 575" fill="none" stroke="#5a3800" strokeWidth=".8" />

    {/* swept shell with its rim */}
    <path
      d="M341 311 C345 370 370 430 400 473 C435 530 520 585 612 617 C640 590 670 530 687 463 C700 410 705 350 693 315 C683 280 672 250 660 210 L650 205 Z"
      fill="url(#gShell)"
    />
    <path d="M344 312 C349 370 374 430 404 472 C440 526 525 580 610 612" fill="none" stroke="#ffa600" strokeWidth="6" />
    <path d="M347 312 C352 370 377 428 407 470 C443 524 527 577 608 607" fill="none" stroke="#5a3a00" strokeWidth=".6" />
    <path d="M610 612 C636 585 666 530 684 463 C697 410 701 350 689 315 C680 285 668 255 656 212" fill="none" stroke="#f09800" strokeWidth="6" />
    <path d="M607 607 C632 582 662 528 680 462 C692 410 697 350 685 316 C676 288 664 256 652 216" fill="none" stroke="#5a3a00" strokeWidth=".6" />
    <path d="M612 617 L628 611" stroke="#4a62e0" strokeWidth="1.500" />
    <path d="M614 606 L618 602 L622 604" fill="#fff" stroke="#fff" />
    <polygon points="643,212 650,199 661,205" fill="#ffb000" stroke="#7a5000" strokeWidth=".6" />
    <polygon points="341,312 347,302 349,312" fill="#ffb000" stroke="#7a5000" strokeWidth=".6" />

    {/* yellow ring and dark band */}
    <path
      d="M350 338 C355 375 395 405 450 415 C500 420 560 400 600 372 C640 345 672 300 670 258 C668 240 655 220 633 205 L360 220 Z"
      fill="url(#gRing)"
      stroke="#4a3300"
      strokeWidth=".6"
    />
    <path
      d="M347 310 C350 345 385 382 440 391 C490 397 560 378 603 335 C630 310 650 285 650 258 L633 205 L360 220 Z"
      fill="url(#gBand)"
      stroke="#4a3300"
      strokeWidth=".6"
    />

    {/* upper cone */}
    <path
      d="M360 205 C350 240 345 270 345 285 C345 305 358 330 395 347 C440 360 500 352 550 335 C600 315 650 280 648 255 C648 235 640 215 632 198 L550 132 L470 125 Z"
      fill="url(#gCone)"
      stroke="#4a3300"
      strokeWidth=".6"
    />
    <path d="M360 208 C364 240 395 262 430 262 C490 262 563 215 565 158 C566 135 545 115 500 113 C440 110 370 165 360 208 Z" fill="url(#gTopBand)" stroke="#4a3300" strokeWidth=".6" />
    <path d="M377 195 C377 222 400 235 427 235 C480 235 537 195 537 152 C537 132 515 119 483 119 C430 119 377 160 377 195 Z" fill="url(#gFace)" stroke="#4a3300" strokeWidth=".6" />
    <path d="M393 192 C395 212 412 223 433 223 C480 223 521 190 521 158 C521 140 508 130 490 130 C445 130 393 160 393 192 Z" fill="url(#gHole)" stroke="#4a3300" strokeWidth=".6" />
    <path d="M404 215 C408 185 445 155 480 156 C500 156 514 159 521 164" fill="none" stroke="#4a3300" strokeWidth=".6" />

    {/* pattern instances */}
    {CUBES.map(([x, y]) => (
      <MiniCube key={`${x}-${y}`} x={x} y={y} />
    ))}
    <MiniCube x={672} y={413} top="#e8f070" left="#c8d440" right="#90a830" />

    {/* blue handles */}
    <path d="M627 352 L624 362 L640 383 L629 360 Z" fill="#5a68dc" />
    <path d="M647 385 L674 372 L685 372 L672 378 Z" fill="#5a68dc" />
    <path d="M643 388 L642 408 L646 414 L649 408 Z" fill="#5a68dc" />

    {/* datum csys */}
    <ellipse cx="601" cy="507" rx="64" ry="41" transform="rotate(-17 601 507)" fill="none" stroke="#b1975f" strokeWidth=".8" />
    <path d="M575 448 L602 507" stroke="#d86a1e" strokeWidth="1.400" strokeDasharray="4 1.500" />
    <path d="M588 475 L628 462 L643 493 L647 522 L606 534 L592 503 L588 475 M602 507 L680 480 M602 507 L606 534 L609 555 M602 507 L655 515" fill="none" stroke="#d9c9b2" strokeWidth=".8" />
    <polygon points="680,480 672,482 674,485" fill="#eee" />
    <polygon points="609,558 606,550 612,550" fill="#eee" />
    <circle cx="655" cy="515" r="2.500" fill="#a89030" />
    <text x="567" y="445" fontSize="8" fontFamily="Liberation Sans" fill="#d87a30">Z</text>
    <text x="685" y="483" fontSize="8" fontFamily="Liberation Sans" fill="#e2e2e2">Y</text>
    <text x="607" y="568" fontSize="8" fontFamily="Liberation Sans" fill="#f0f0f0">X</text>
  </ModelSvg>
);

/* ---------- data ---------- */
const TABS = ["装配", "曲线", "曲面", "分析", "视图", "渲染", "工具", "应用模块"];

const TOOLBAR = [
  ["faded"], ["faded2"], ["snapBox"], ["caret", 6], ["hook"], ["faded2"], ["faded"], ["ghostBox"], ["caret", 6],
  ["cyl"], ["blueCube"], ["dotsCross", 16.5, true], ["slash", 16.5, true], ["slash", 16.5, true], ["curl"], ["tri"],
  ["target", 16.5, true], ["redRing"], ["redCross", 16.5, true], ["dash"], ["face"], ["faceDark"], ["plates"],
  ["sep"], ["zoomBox"], ["zoomBox2"], ["rotate"], ["paint"], ["ghostDocs"], ["panel"], ["caret", 6], ["globe"], ["caret", 8],
];

const SIDE = [
  ["sideTree", 15, 19], ["sideAsm", 9, 17], ["sideLink", 13, 17], ["sideBooks", 12, 17], ["sideInfo", 16, 17],
  ["sideDoc", 20, 17], ["sideClock", 19, 17], ["sideColor", 10, 17], ["sideRuler", 12, 17], ["sideRobot", 9, 17],
];

const MINI_STD = ["redGrid", "stack", "stack2", "tag", "wrenchBlue", "wrenchMix", "wrenchGold", "goldGear"];
const MINI_GEAR = ["clamp", "clamp2", "pin", null];
const MINI_SPRING = ["spring", "screw", "drum", "coil"];
const MINI_CAM = ["checkTool", "sheet", "sheet2", "axis"];
const MINI_MODEL = ["triangle", "tableRed", "starBox", "clips", "frame", "bench", "badgeTool", null];

const MiniTools = ({ list, cols }) => (
  <MiniGrid $cols={cols}>
    {list.map((k, i) => (
      <div key={i}>{k && <Icon k={k} s={12} />}</div>
    ))}
  </MiniGrid>
);

export default function App() {
  return (
    <Page>
      <GlobalStyle />
      <TabBar>
        <FileTab>文件(F)</FileTab>
        <Tab $active $w={34}>主页</Tab>
        {TABS.map((t) => (
          <Tab key={t}>{t}</Tab>
        ))}
        <Tab $w={88}>92工业网——朴心</Tab>
      </TabBar>

      <Ribbon>
        <Group $w={158}>
          <GroupBody $pl={8}>
            <BigTool $w={22}>
              <BigIcon><Icon k="sketch" s={20} /></BigIcon>
              草图
            </BigTool>
            <BigTool $w={46}>
              <BigIcon><Icon k="task" s={20} /></BigIcon>
              在任务环境<br />中绘制草图
            </BigTool>
            <Gallery>
              {["curve", "rect", "line", "arc", "circle", "plus"].map((k) => (
                <Icon key={k} k={k} s={15} />
              ))}
            </Gallery>
            <GalleryScroll>
              <span>▴</span>
              <Caret $m="0" />
              <Caret $m="0" />
            </GalleryScroll>
          </GroupBody>
          <GroupFoot>直接草图</GroupFoot>
        </Group>

        <Group $w={242}>
          <GroupBody $pl={6}>
            <BigTool $w={34}>
              <BigIcon><Icon k="plane" s={21} /></BigIcon>
              基准平面
              <Caret />
            </BigTool>
            <BigTool $w={26}>
              <BigIcon><Icon k="extrude" s={21} /></BigIcon>
              拉伸
              <Caret />
            </BigTool>
            <BigTool $w={26}>
              <BigIcon><Icon k="hole" s={20} /></BigIcon>
              孔
            </BigTool>
            <ToolList $w={50} $pl={5}>
              <ListItem><Icon k="pattern" s={11} />阵列特征</ListItem>
              <ListItem><Icon k="unite" s={11} />合并<Caret $m="0 0 0 3px" /></ListItem>
              <ListItem><Icon k="shell" s={11} />抽壳</ListItem>
            </ToolList>
            <BigTool $w={28}>
              <BigIcon><Icon k="blend" s={21} /></BigIcon>
              边倒圆
              <Caret />
            </BigTool>
            <ToolList $w={45} $pl={2}>
              <ListItem><Icon k="chamfer" s={11} />倒斜角</ListItem>
              <ListItem><Icon k="trim" s={11} />修剪体</ListItem>
              <ListItem><Icon k="draft" s={11} />拔模</ListItem>
            </ToolList>
            <BigTool $w={24}>
              <MoreButton><Icon k="push" s={14} /></MoreButton>
              更多
              <Caret />
            </BigTool>
          </GroupBody>
          <GroupFoot>特征</GroupFoot>
        </Group>

        <Group $w={114}>
          <GroupBody $pl={7}>
            <BigTool $w={24}>
              <BigIcon><Icon k="move" s={21} /></BigIcon>
              移动面
            </BigTool>
            <ToolList $w={53} $pl={6}>
              <ListItem><Icon k="offset" s={11} />偏置区域</ListItem>
              <ListItem><Icon k="replace" s={11} />替换面</ListItem>
              <ListItem><Icon k="remove" s={11} />删除面</ListItem>
            </ToolList>
            <BigTool $w={28}>
              <MoreButton><Icon k="sync" s={14} /></MoreButton>
              更多
              <Caret />
            </BigTool>
          </GroupBody>
          <GroupFoot>同步建模</GroupFoot>
        </Group>

        <Group $w={67}>
          <GroupBody $pl={1}><MiniTools list={MINI_STD} cols={4} /></GroupBody>
          <GroupFoot>标准化工具 - G...</GroupFoot>
        </Group>
        <Group $w={34}>
          <GroupBody $pl={1}><MiniTools list={MINI_GEAR} cols={2} /></GroupBody>
          <GroupFoot>齿轮...</GroupFoot>
        </Group>
        <Group $w={38}>
          <GroupBody $pl={2}><MiniTools list={MINI_SPRING} cols={2} /></GroupBody>
          <GroupFoot>弹簧...</GroupFoot>
        </Group>
        <Group $w={34}>
          <GroupBody $pl={1}><MiniTools list={MINI_CAM} cols={2} /></GroupBody>
          <GroupFoot>加工...</GroupFoot>
        </Group>
        <Group $w={66}>
          <GroupBody $pl={1}><MiniTools list={MINI_MODEL} cols={4} /></GroupBody>
          <GroupFoot>建模工具 - G...</GroupFoot>
        </Group>
      </Ribbon>

      <QuickBar>
        <MenuButton>
          <Icon k="filterMenu" s={11} />
          菜单(M)
          <Caret $m="0" />
        </MenuButton>
        <BarDivider />
        <BarSelect $w={87} $mr={6}>无选择过滤器<Caret $m="0" /></BarSelect>
        <BarSelect $w={92} $mr={2}>仅在工作部件内<Caret $m="0" /></BarSelect>
        {TOOLBAR.map(([k, w, on], i) =>
          k === "sep" ? (
            <BarDivider key={i} $m="0 3px" />
          ) : k === "caret" ? (
            <BarIcon key={i} $w={w}><Caret $m="0" /></BarIcon>
          ) : (
            <BarIcon key={i} $w={w} $on={on}><Icon k={k} s={11} /></BarIcon>
          )
        )}
      </QuickBar>

      <DocStrip>
        <GearCell><Icon k="gear" s={11} /></GearCell>
        <DocTab>
          <Icon k="nxLogo" s={11} />
          滚花键.prt
          <Icon k="doc" s={8} />
          <TabClose>✕</TabClose>
        </DocTab>
      </DocStrip>

      <Body>
        <SideBar>
          {SIDE.map(([k, mt, s]) => (
            <SideIcon key={k} $mt={mt}><Icon k={k} s={s} /></SideIcon>
          ))}
        </SideBar>

        <Panel>
          <PanelHead>
            <Icon k="gear" s={11} />
            <span>阵列特征</span>
            <HeadActions>
              <Icon k="refresh" s={9} />
              <Icon k="close" s={9} />
            </HeadActions>
          </PanelHead>
          <PanelMid>
            <PanelColumn>
              <SelectBlock>
                <CheckedLabel><Icon k="check" s={9} />选择特征 (2)</CheckedLabel>
                <SmallBtn $w={22} $h={20} $bg="#fff"><Icon k="box3d" s={16} /></SmallBtn>
              </SelectBlock>
              <Section $h={18} $mb={1}>
                <SectionTitle>参考点<Chevron /></SectionTitle>
              </Section>
              <Section $h={336} $mb={3}>
                <SectionTitle>阵列定义<Chevron up /></SectionTitle>
                <FieldRow $h={21}>
                  布局
                  <Drop $w={92} $h={19}>
                    <DropValue><Icon k="ring" s={11} />圆形</DropValue>
                    <Caret $m="0" />
                  </Drop>
                </FieldRow>
                <Sub $h={15}><SubTitle>边界定义<Chevron /></SubTitle></Sub>
                <Sub $h={69}>
                  <SubTitle>旋转轴<Chevron up /></SubTitle>
                  <FieldRow $h={20} $mt={3}>
                    <VectorBar>
                      <CheckedLabel><Icon k="check" s={9} />指定矢量</CheckedLabel>
                      <SmallBtn $h={14} $bg="#f4f4f4"><Icon k="vectorX" s={12} /></SmallBtn>
                    </VectorBar>
                    <BtnGroup>
                      <SmallBtn $w={13} $h={16}><Icon k="vecAxes" s={11} /></SmallBtn>
                      <SmallBtn $w={33} $h={20} $bg="#ffdf70" $line="#ffdf70">
                        <Icon k="inferred" s={14} />
                        <Caret $m="0 0 0 4px" />
                      </SmallBtn>
                    </BtnGroup>
                  </FieldRow>
                  <FieldRow $h={22} $mt={3}>
                    指定点
                    <BtnGroup>
                      <SmallBtn $h={15}><Icon k="vecPlus" s={12} /></SmallBtn>
                      <SmallBtn $w={33} $h={21} $bg="#f2f2f2">
                        <Icon k="wand" s={14} />
                        <Caret $m="0 0 0 4px" />
                      </SmallBtn>
                    </BtnGroup>
                  </FieldRow>
                </Sub>
                <Sub $h={73}>
                  <SubTitle>斜角方向<Chevron up /></SubTitle>
                  <FieldRow $h={17} $mt={3}>
                    间距
                    <Drop $w={93} $h={16}><DropValue>数量和跨距</DropValue><Caret $m="0" /></Drop>
                  </FieldRow>
                  <FieldRow $h={15} $mt={2}>
                    数量
                    <Drop $w={63} $h={14}><DropValue>19</DropValue><Caret $m="0" /></Drop>
                  </FieldRow>
                  <FieldRow $h={16} $mt={1}>
                    跨角
                    <Drop $w={93} $h={16}>
                      <DropValue>360</DropValue>
                      <DropValue>°</DropValue>
                      <Caret $m="0" />
                    </Drop>
                  </FieldRow>
                </Sub>
                <Sub $h={38}>
                  <SubTitle>辐射<Chevron up /></SubTitle>
                  <CheckRow $h={22}><CheckBox />创建同心成员</CheckRow>
                </Sub>
                <Sub $h={15}><SubTitle>阵列增量<Chevron /></SubTitle></Sub>
                <Sub $h={15}><SubTitle>实例点<Chevron /></SubTitle></Sub>
                <CheckRow $h={22} $between>
                  <DropValue><CheckBox />使用电子表格</DropValue>
                  <SmallBtn $w={22} $h={21} $bg="#fff"><Icon k="table" s={16} /></SmallBtn>
                </CheckRow>
                <Sub $h={15}><SubTitle>方位<Chevron /></SubTitle></Sub>
                <Sub $h={15}><SubTitle>阵列设置<Chevron /></SubTitle></Sub>
              </Section>
              <Section $h={61} $mb={1}>
                <SectionTitle>阵列方法<Chevron up /></SectionTitle>
                <FieldRow $h={18} $mt={3}>
                  方法
                  <Drop $w={92} $h={16}><DropValue>变化</DropValue><Caret $m="0" /></Drop>
                </FieldRow>
                <Sub $h={16}><SubTitle>可重用的引用<Chevron /></SubTitle></Sub>
              </Section>
              <Section $h={46}>
                <SectionTitle>预览<Chevron up /></SectionTitle>
                <RightRow>
                  显示结果
                  <SmallBtn $w={21} $h={21} $bg="#fff"><Icon k="lens" s={17} /></SmallBtn>
                </RightRow>
              </Section>
            </PanelColumn>
            <ScrollTrack>
              <ScrollArrow>▴</ScrollArrow>
              <ScrollThumb>≡</ScrollThumb>
              <ScrollArrow $mt={3}>▾</ScrollArrow>
            </ScrollTrack>
          </PanelMid>
          <PanelFoot>
            <ActionBtn $primary>确定</ActionBtn>
            <ActionBtn>应用</ActionBtn>
            <ActionBtn>取消</ActionBtn>
          </PanelFoot>
        </Panel>

        <Viewport>
          <Model />
        </Viewport>
      </Body>

      <ArrowLayer viewBox="0 0 750 656">
        {ARROWS.map(([from, to, w], i) => (
          <polygon key={i} points={arrow(from, to, w)} fill="#f0333a" />
        ))}
      </ArrowLayer>

      <Mark $x={43} $y={117} $w={41} $h={14} />
      <Mark $x={135} $y={196} $w={59} $h={22} />
      <Mark $x={40} $y={252} $w={138} $h={22} />
      <Mark $x={131} $y={323} $w={51} $h={17} />
      <Mark $x={161} $y={341} $w={21} $h={15} />
      <Mark $x={132} $y={358} $w={27} $h={15} />

      <Badge $x={136} $y={168}>1</Badge>
      <Tip $x={148} $y={157} $w={75}>激活阵列特征</Tip>
      <Badge $x={281} $y={162}>2</Badge>
      <Tip $x={293} $y={152} $w={85}>类型为圆形阵列</Tip>
      <Badge $x={25} $y={342}>3</Badge>
      <Tip $x={38} $y={332} $w={71}>阵列轴为Z轴</Tip>
      <Badge $x={203} $y={440}>4</Badge>
      <Tip $x={216} $y={429} $w={85}>参考我给的数值</Tip>
    </Page>
  );
}
